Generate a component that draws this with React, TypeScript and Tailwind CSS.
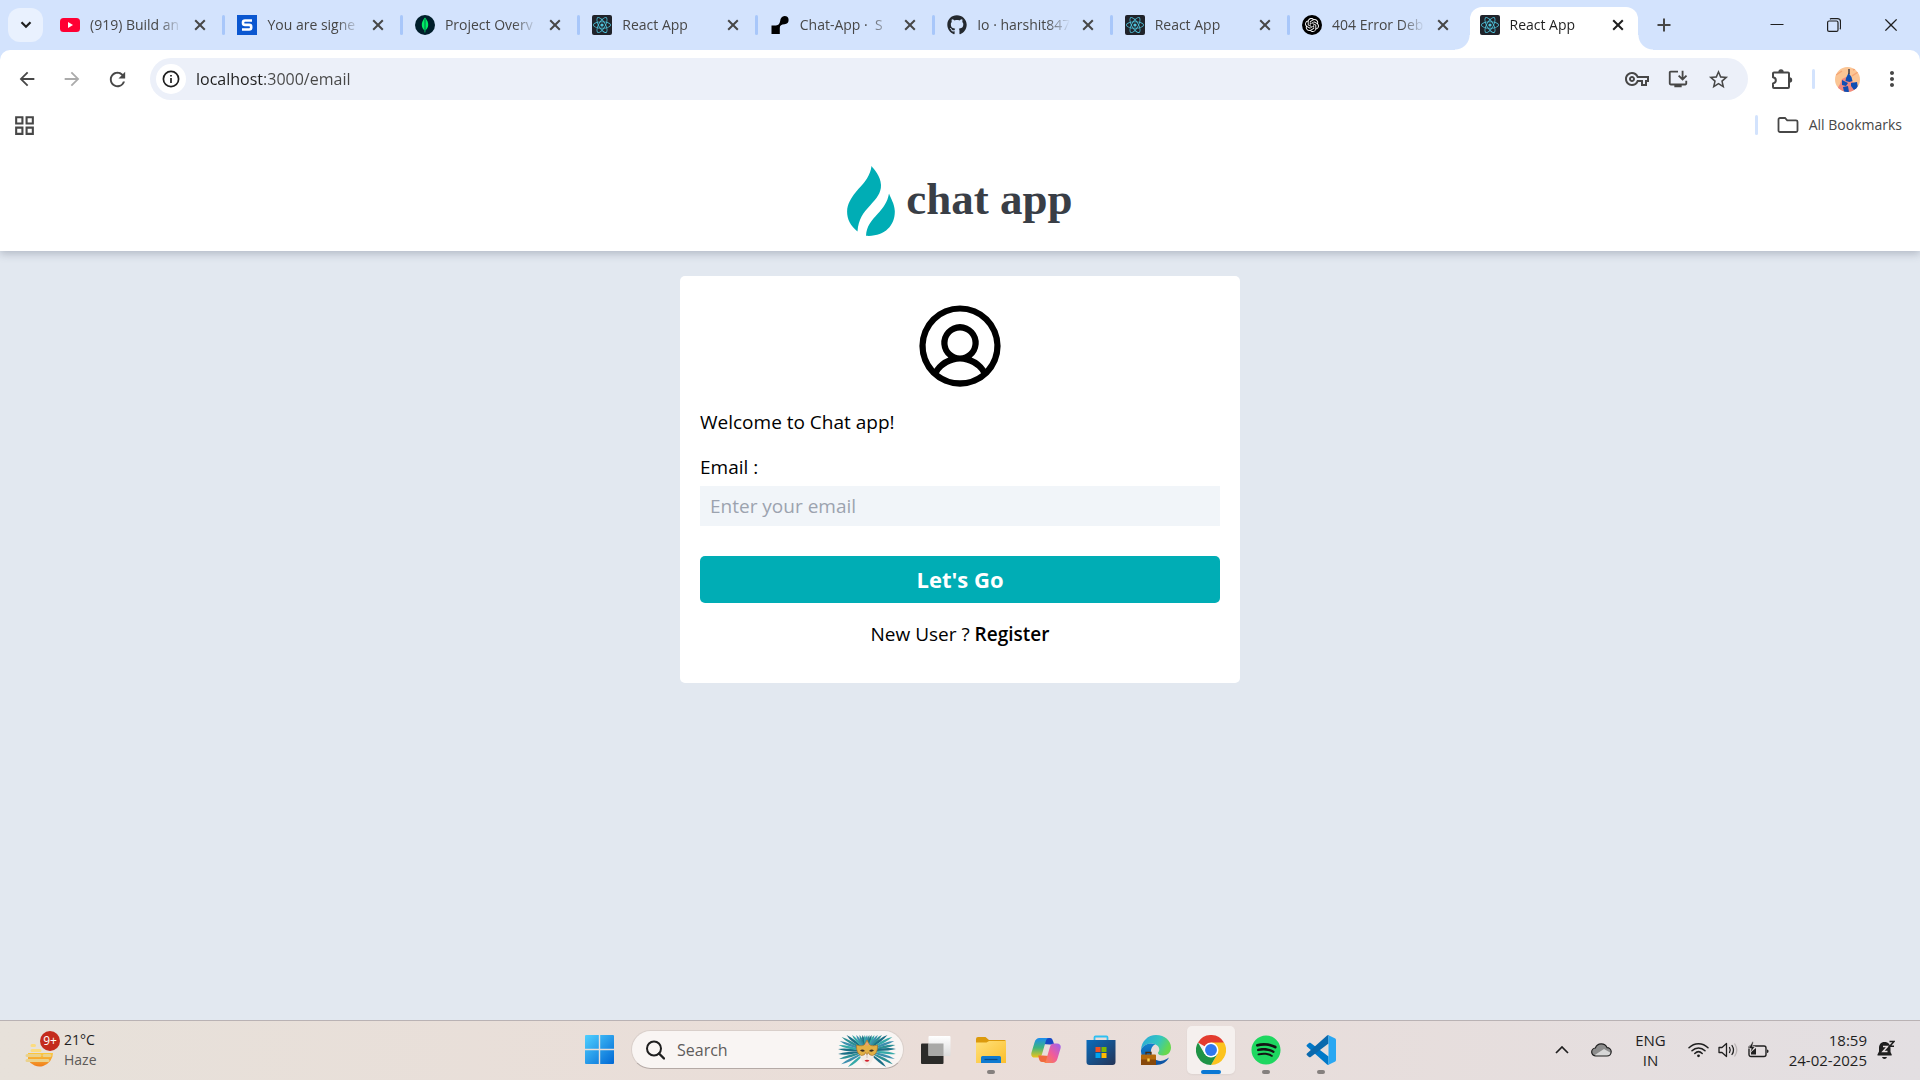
import type { ReactNode } from "react";
import { FaGithub, FaReact, FaSpotify } from "react-icons/fa";
import {
  MdArrowBack,
  MdArrowForward,
  MdMoreVert,
  MdOutlineGridView,
  MdOutlineInstallDesktop,
  MdOutlineVpnKey,
  MdRefresh,
  MdStarOutline,
} from "react-icons/md";
import { PiUserCircle } from "react-icons/pi";
import { SiOpenai } from "react-icons/si";
import { VscChromeClose } from "react-icons/vsc";

/* ---------- Favicons ---------- */

function YoutubeIcon() {
  return (
    <svg viewBox="0 0 20 20" className="size-5">
      <rect y="3" width="20" height="14" rx="3.5" fill="#ff0033" />
      <path d="M8 7l5 3-5 3z" fill="#fff" />
    </svg>
  );
}

function LetterSIcon() {
  return (
    <svg viewBox="0 0 20 20" className="size-5">
      <rect width="20" height="20" fill="#0b57d0" />
      <path
        d="M15 5.500H8a2 2 0 0 0-2 2v.4a2 2 0 0 0 2 2h4.200a2 2 0 0 1 2 2v.6a2 2 0 0 1-2 2H5"
        fill="none"
        stroke="#fff"
        strokeWidth="2.600"
      />
    </svg>
  );
}

function MongoIcon() {
  return (
    <svg viewBox="0 0 20 20" className="size-5">
      <circle cx="10" cy="10" r="10" fill="#001e2b" />
      <path d="M10 2.500c2.600 3 3.400 5.300 3.200 7.700-.2 2.500-1.500 4-2.800 5l-.2 2.300h-.5l-.2-2.300c-1.300-1-2.600-2.500-2.700-5C6.700 7.700 7.600 5.300 10 2.500z" fill="#00ed64" />
      <path d="M10 4v12" stroke="#00684a" strokeWidth="1" />
    </svg>
  );
}

function ReactIcon() {
  return (
    <span className="flex size-5 items-center justify-center rounded-xs bg-[#20232a]">
      <FaReact className="size-[18px] text-[#4fc4dc]" />
    </span>
  );
}

function RenderIcon() {
  return (
    <svg viewBox="0 0 20 20" className="size-5">
      <path d="M14.500 1a4 4 0 0 1 0 8.200c-3 .2-4.700 1-4.700 3.800v6H1.500v-8.500H6c2.500-.2 3.800-2 4.100-4.300C10.500 3.200 12 1 14.500 1z" fill="#000" />
    </svg>
  );
}

function OpenAiIcon() {
  return (
    <span className="flex size-5 items-center justify-center rounded-full bg-black">
      <SiOpenai className="size-[14px] text-white" />
    </span>
  );
}

/* ---------- Browser glyphs ---------- */

function CloseGlyph() {
  return (
    <svg viewBox="0 0 12 12" className="size-3" fill="none" stroke="currentColor" strokeWidth="2">
      <path d="M1.200 1.200l9.600 9.600M10.800 1.200l-9.600 9.600" />
    </svg>
  );
}

function InfoGlyph() {
  return (
    <svg viewBox="0 0 18 18" className="size-[18px]" fill="none" stroke="#1f1f1f" strokeWidth="1.700">
      <circle cx="9" cy="9" r="7.600" />
      <path d="M9 8v5M9 4.900v1.700" />
    </svg>
  );
}

function ExtensionGlyph() {
  return (
    <svg viewBox="0 0 22 22" className="size-[22px]" fill="none" stroke="#474747" strokeWidth="2">
      <path d="M3 4.500h14a1 1 0 0 1 1 1V19a1 1 0 0 1-1 1H3a1 1 0 0 1-1-1v-3.600c3.800-.6 3.800-5.600 0-6.200V5.500a1 1 0 0 1 1-1z" strokeLinejoin="round" />
      <path d="M7.300 4a2.700 2.700 0 0 1 5.400 0zM18.500 9.300a2.700 2.700 0 0 1 0 5.400z" fill="#474747" stroke="none" />
    </svg>
  );
}

function FolderGlyph() {
  return (
    <svg viewBox="0 0 22 18" className="h-[18px] w-[22px]" fill="none" stroke="#474747" strokeWidth="1.800">
      <path d="M1.500 3.500a1.500 1.500 0 0 1 1.500-1.500h5l2.200 2.300H19a1.500 1.500 0 0 1 1.500 1.500v8.700A1.500 1.500 0 0 1 19 16H3a1.500 1.500 0 0 1-1.500-1.500z" />
    </svg>
  );
}

function Avatar() {
  return (
    <svg viewBox="0 0 25 25" className="size-[25px]">
      <clipPath id="avatar-clip">
        <circle cx="12.500" cy="12.500" r="12.500" />
      </clipPath>
      <g clipPath="url(#avatar-clip)">
        <rect width="25" height="25" fill="#fbc594" />
        <path d="M1 8l6-4M17 9l6-4M18 3l4-2" stroke="#f5a574" strokeWidth="1.500" />
        <path d="M2 22l3-5 2-5 4-2 5 3 4 4 3 6-4 3H5z" fill="#f08a80" />
        <path d="M11 11l2.500-5 3 4 1 4-3 1-4-1zM7 13l6 3-2 3-4-1zM16 16l6-1 1 6-4 2-3-4zM8 20l5-1 1 6H9z" fill="#0f4fb4" />
        <path d="M14 2v5" stroke="#33323f" strokeWidth="1.400" />
      </g>
    </svg>
  );
}

/* ---------- Browser window ---------- */

type Tab = { title: string; icon: ReactNode; active?: boolean };

const tabs: Tab[] = [
  { title: "(919) Build an", icon: <YoutubeIcon /> },
  { title: "You are signe", icon: <LetterSIcon /> },
  { title: "Project Overv", icon: <MongoIcon /> },
  { title: "React App", icon: <ReactIcon /> },
  { title: "Chat-App \u00b7 \u00a0S", icon: <RenderIcon /> },
  { title: "Io · harshit847", icon: <FaGithub className="size-5 text-[#24292f]" /> },
  { title: "React App", icon: <ReactIcon /> },
  { title: "404 Error Deb", icon: <OpenAiIcon /> },
  { title: "React App", icon: <ReactIcon />, active: true },
];

function BrowserTab({ title, icon, active, separated }: Tab & { separated: boolean }) {
  return (
    <div className="flex h-full min-w-0 flex-1 items-end">
      <div
        className={
          active
            ? "relative flex h-[43px] min-w-0 flex-1 items-center rounded-t-xl bg-white pr-2.5 pb-[7px] pl-2.5 text-[#1f1f1f]"
            : "flex h-[43px] min-w-0 flex-1 items-center pr-[7px] pb-[7px] pl-2.5 text-[#474747]"
        }
      >
        {active && (
          <>
            <span className="absolute bottom-0 -left-[15px] size-[15px] bg-[radial-gradient(circle_at_0_0,transparent_14px,white_15px)]" />
            <span className="absolute -right-[15px] bottom-0 size-[15px] bg-[radial-gradient(circle_at_100%_0,transparent_14px,white_15px)]" />
          </>
        )}
        <span className="shrink-0">{icon}</span>
        <span className="ml-2.5 min-w-0 flex-1 overflow-hidden mask-r-from-75% mask-r-to-100% text-sm leading-5 whitespace-nowrap">
          {title}
        </span>
        <button type="button" aria-label={"Close " + title} className="ml-2 flex size-5 shrink-0 items-center justify-center">
          <CloseGlyph />
        </button>
      </div>
      {separated ? (
        <span className="mr-0.5 mb-[15px] ml-[5px] h-5 w-[3px] shrink-0 rounded-full bg-[#a8c7fa]" />
      ) : (
        <span className={active ? "w-[9px] shrink-0" : "w-2.5 shrink-0"} />
      )}
    </div>
  );
}

function TabStrip() {
  return (
    <div className="flex h-[50px] bg-[#d3e3fd]">
      <button type="button" aria-label="Search tabs" className="mt-2 mr-[7px] ml-2 flex h-[34px] w-[35px] shrink-0 items-center justify-center rounded-xl bg-[#e9f1fe]">
        <svg viewBox="0 0 12 8" className="h-2 w-3" fill="none" stroke="#1f1f1f" strokeWidth="2.200">
          <path d="M1.500 1.300L6 5.800l4.500-4.500" />
        </svg>
      </button>
      <div className="flex max-w-[1597px] min-w-0 flex-1">
        {tabs.map((tab, i) => (
          <BrowserTab key={i} {...tab} separated={!tab.active && !tabs[i + 1]?.active} />
        ))}
      </div>
      <button type="button" aria-label="New tab" className="flex w-[34px] shrink-0 items-center justify-center">
        <svg viewBox="0 0 14 14" className="size-3.5" stroke="#474747" strokeWidth="2">
          <path d="M7 .5v13M.5 7h13" />
        </svg>
      </button>
      <div className="ml-auto flex shrink-0 text-[#1f1f1f]">
        <button type="button" aria-label="Minimize" className="flex w-[57px] items-center justify-center">
          <svg viewBox="0 0 14 14" className="size-3.5" stroke="#1f1f1f">
            <path d="M.5 6.500h13" />
          </svg>
        </button>
        <button type="button" aria-label="Restore" className="flex w-[57px] items-center justify-center">
          <svg viewBox="0 0 14 14" className="size-3.5" fill="none" stroke="#1f1f1f" strokeWidth="1.200">
            <rect x=".6" y="3" width="10.400" height="10.400" rx="1.500" />
            <path d="M3 1.200A2 2 0 0 1 4 .7h6.500a3 3 0 0 1 3 3V10a2 2 0 0 1-.6 1.200" />
          </svg>
        </button>
        <button type="button" aria-label="Close window" className="flex w-[58px] items-center justify-center">
          <VscChromeClose className="size-[18px]" />
        </button>
      </div>
    </div>
  );
}

function Toolbar() {
  return (
    <div className="bg-[#d3e3fd]">
      <div className="flex h-14 items-center rounded-t-[10px] bg-white px-4 pt-0.5 text-[#474747]">
        <button type="button" aria-label="Back" className="mr-[23px]">
          <MdArrowBack className="size-[22px]" />
        </button>
        <button type="button" aria-label="Forward" className="mr-[23px] text-[#ababab]">
          <MdArrowForward className="size-[22px]" />
        </button>
        <button type="button" aria-label="Reload">
          <MdRefresh className="size-[23px]" />
        </button>
        <div className="ml-[21px] flex h-[42px] min-w-0 flex-1 items-center rounded-full bg-[#ecf0f9] pr-[18px] pl-1.5">
          <button type="button" aria-label="View site information" className="flex size-[30px] shrink-0 items-center justify-center rounded-full bg-white">
            <InfoGlyph />
          </button>
          <input
            aria-label="Address"
            defaultValue="localhost:3000/email"
            className="ml-2.5 min-w-0 flex-1 bg-[linear-gradient(90deg,#1f1f1f_68px,#474747_68px)] bg-clip-text text-base text-transparent outline-none"
          />
          <div className="flex items-center gap-[18px]">
            <button type="button" aria-label="Passwords">
              <MdOutlineVpnKey className="size-6" />
            </button>
            <button type="button" aria-label="Install app">
              <MdOutlineInstallDesktop className="size-[22px]" />
            </button>
            <button type="button" aria-label="Bookmark this page">
              <MdStarOutline className="size-[23px]" />
            </button>
          </div>
        </div>
        <button type="button" aria-label="Extensions" className="ml-[23px]">
          <ExtensionGlyph />
        </button>
        <span className="ml-[19px] h-5 w-[3px] rounded-full bg-[#d3e3fd]" />
        <button type="button" aria-label="Profile" className="ml-5">
          <Avatar />
        </button>
        <button type="button" aria-label="Menu" className="ml-5">
          <MdMoreVert className="size-6" />
        </button>
      </div>
    </div>
  );
}

function BookmarksBar() {
  return (
    <div className="relative z-10 flex h-10 items-center bg-white pr-[18px] pb-0.5 pl-3 text-[#474747]">
      <button type="button" aria-label="Tab groups">
        <MdOutlineGridView className="size-[25px]" />
      </button>
      <span className="ml-auto h-5 w-[3px] rounded-full bg-[#d3e3fd]" />
      <button type="button" className="ml-[19px] flex items-center gap-2.5 text-sm leading-5">
        <FolderGlyph />
        All Bookmarks
      </button>
    </div>
  );
}

/* ---------- Page ---------- */

function Logo() {
  return (
    <div className="flex items-center justify-center gap-[11px] pt-1">
      <svg viewBox="0 0 48 70" className="h-[70px] w-12" fill="#00adb5">
        <path d="M24.500 0C27 3.500 33.500 9.500 34 19c.2 8-4.500 13.500-10.500 20C16 47 11.500 53 10.500 65.500 3.500 60 0 53 .1 45.500.5 31 15 21 20 12.500c2.500-4.300 4-8 4.500-12.500z" />
        <path d="M42 27.500c1.500 4.500 5.500 10 5.800 17.500C48.200 59.500 37.500 71 19 69.800c.5-9.800 5.500-15.300 11.500-21.800 6-6.300 10-12 11.500-20.500z" />
      </svg>
      <span className="pb-1 font-['Liberation_Serif',serif] text-[45px] leading-[56px] font-bold text-[#393e46]">chat app</span>
    </div>
  );
}

function EmailCard() {
  return (
    <form className="mx-5 w-full max-w-[560px] rounded-[5px] bg-white p-5 text-[19px] leading-[30px] text-black">
      <PiUserCircle className="mx-auto size-[100px]" />
      <h3 className="mt-[11px]">Welcome to Chat app!</h3>
      <div className="mt-[15px] flex flex-col">
        <label htmlFor="email">Email :</label>
        <input
          id="email"
          type="email"
          placeholder="Enter your email"
          className="mt-1 h-10 bg-[#f1f5f9] px-2.5 outline-none placeholder:text-[#9ca3af]"
        />
      </div>
      <button type="button" className="mt-[30px] flex h-[47px] w-full items-center justify-center rounded-[5px] bg-[#00adb5] pb-0.5 text-[22px] font-bold text-white">
        Let's Go
      </button>
      <p className="mt-4 mb-[14px] text-center">
        New User ?{" "}
        <a href="#register" className="font-semibold">
          Register
        </a>
      </p>
    </form>
  );
}

/* ---------- Taskbar icons ---------- */

function WeatherIcon() {
  return (
    <svg viewBox="0 0 36 38" className="h-[38px] w-9">
      <defs>
        <linearGradient id="sun" x1="0" y1="0" x2="0" y2="1">
          <stop offset="0" stopColor="#fcc93c" />
          <stop offset="1" stopColor="#f07d1c" />
        </linearGradient>
      </defs>
      <path d="M3 25V22H28a13.500 13.500 0 0 1-25 7z" fill="url(#sun)" />
      <g strokeLinecap="round" strokeWidth="3" fill="none">
        <path d="M7 14.500h2.500M7 19.500h8" stroke="#fbdc80" />
        <path d="M2 24.500h13M19 24.500h6M2 29.500h21" stroke="#ead28c" />
      </g>
      <circle cx="25" cy="10" r="10" fill="#c42b1c" />
      <text x="25" y="14" textAnchor="middle" fontSize="12" fill="#fff">
        9+
      </text>
    </svg>
  );
}

function StartIcon() {
  return (
    <svg viewBox="0 0 29 29" className="size-[29px]">
      <defs>
        <linearGradient id="start" x1="0" y1="0" x2="1" y2="1">
          <stop offset="0" stopColor="#4fd0ff" />
          <stop offset="1" stopColor="#0067d4" />
        </linearGradient>
      </defs>
      <path fill="url(#start)" d="M1 0h12.800v13.800H0V1a1 1 0 0 1 1-1zM15.200 0H28a1 1 0 0 1 1 1v12.800H15.200zM0 15.200h13.800V29H1a1 1 0 0 1-1-1zM15.200 15.200H29V28a1 1 0 0 1-1 1H15.200z" />
    </svg>
  );
}

const feathers = [
  -176, -168, -160, -151, -142, -133, -124, -115, -106, -98, -90, -82, -74, -65, -56, -47, -38, -29, -20, -12, -4, 6, 16, 27, 40, 140, 153, 164,
  174,
];
const featherColors = ["#1b6f86", "#35a9a8", "#3c8fae", "#2c8f95"];

function featherLength(angle: number) {
  const rad = (angle * Math.PI) / 180;
  return Math.min(29, 16 / Math.max(0.01, Math.abs(Math.sin(rad))));
}

function MaskIcon() {
  return (
    <svg viewBox="-30 -18 60 34" className="h-[34px] w-[60px] shrink-0">
      {feathers.map((angle, i) => {
        const len = featherLength(angle);
        return (
          <path
            key={angle}
            transform={"rotate(" + angle + ")"}
            d={"M3 0Q" + len * 0.7 + " -3.2 " + len + " 0Q" + len * 0.7 + " 2 3 0z"}
            fill={featherColors[i % 4]}
          />
        );
      })}
      <path d="M-7-2H7q1 7-2.500 13L0 15.500-4.500 11Q-8 5-7-2z" fill="#f3ebe5" />
      <path
        d="M-10.500-6Q-4-4-2-7L0-11 2-7Q4-4 10.500-6 11 3 5.500 4.500 2 4.500 1.300 1.500L0 4-1.300 1.500Q-2 4.500-5.500 4.500-11 3-10.500-6z"
        fill="#e2b045"
        stroke="#a8742a"
        strokeWidth=".7"
      />
      <path d="M-7-.5Q-4.500-2.500-2 0-5 1.500-7-.5zM7-.5Q4.500-2.500 2 0 5 1.500 7-.5z" fill="#3c2c20" />
      <path d="M0 3v4" stroke="#cfc1b8" />
      <path d="M-2.500 9.500Q0 8 2.500 9.500 0 12-2.500 9.500z" fill="#d3202c" />
      <circle cx="0" cy="-7" r="1.600" fill="#e3a07c" />
    </svg>
  );
}

function TaskViewIcon() {
  return (
    <svg viewBox="0 0 30 30" className="size-[30px]">
      <defs>
        <linearGradient id="tv" x1="0" y1="0" x2="0" y2="1">
          <stop offset="0" stopColor="#fff" />
          <stop offset="1" stopColor="#dcdcdc" />
        </linearGradient>
      </defs>
      <rect y="8.500" width="22.500" height="20.500" rx="1" fill="#2b2b29" />
      <rect x="7.500" y="1" width="22" height="20" rx="1" fill="url(#tv)" />
      <path d="M7.500 8.500h15V21h-15z" fill="#a9a9a7" />
    </svg>
  );
}

function ExplorerIcon() {
  return (
    <svg viewBox="0 0 30 30" className="size-[30px]">
      <defs>
        <linearGradient id="fold" x1="0" y1="0" x2="1" y2="1">
          <stop offset="0" stopColor="#ffe07a" />
          <stop offset="1" stopColor="#fbbf2d" />
        </linearGradient>
      </defs>
      <path d="M0 4a2 2 0 0 1 2-2h7.500L13 5h15.500A1.500 1.500 0 0 1 30 6.500V12H0z" fill="#dc9a0c" />
      <path d="M0 7.500h10.500L13 6h17v22H0z" fill="url(#fold)" />
      <path d="M5 28v-5.500A1.500 1.500 0 0 1 6.500 21h17a1.500 1.500 0 0 1 1.500 1.500V28z" fill="#0f7ad0" />
      <path d="M8.500 24.500h13" stroke="#0a4c87" strokeWidth="1.200" />
    </svg>
  );
}

function CopilotIcon() {
  return (
    <svg viewBox="0 0 30 28" className="h-7 w-[30px]">
      <defs>
        <linearGradient id="cpa" x1="0" y1="0" x2="0" y2="1">
          <stop offset="0" stopColor="#1b8df0" />
          <stop offset=".5" stopColor="#3fb57c" />
          <stop offset="1" stopColor="#f0c419" />
        </linearGradient>
        <linearGradient id="cpb" x1="1" y1="0" x2="0" y2="1">
          <stop offset="0" stopColor="#9a62f2" />
          <stop offset=".5" stopColor="#f05c9b" />
          <stop offset="1" stopColor="#fb8a3c" />
        </linearGradient>
      </defs>
      <path d="M14 2h5c2 0 2.500 1.500 3 3l1.200 3.500h-4.500L12 8z" fill="#1648c4" />
      <path d="M8.500 2H18c-2 0-2.700 1.500-3.300 3.500l-3.500 12C10.500 20 9.500 21.500 7 21.500H4c-3 0-4.300-2-3.500-5l3-10C4.300 3.600 6 2 8.500 2z" fill="url(#cpa)" />
      <path d="M16 26h-5c-2 0-2.500-1.500-3-3l-.8-3.500h4.500l6.300.5z" fill="#f06a3c" />
      <path d="M21.500 27H12c2 0 2.700-1.500 3.300-3.500l3.500-12c.7-2.500 1.700-4 4.200-4h3c3 0 4.300 2 3.500 5l-3 10c-.8 2.900-2.500 4.500-5 4.500z" fill="url(#cpb)" />
    </svg>
  );
}

function StoreIcon() {
  return (
    <svg viewBox="0 0 30 30" className="size-[30px]">
      <defs>
        <linearGradient id="store" x1="0" y1="0" x2="1" y2="1">
          <stop offset="0" stopColor="#0a6cbc" />
          <stop offset="1" stopColor="#243457" />
        </linearGradient>
      </defs>
      <path d="M8.500 6V2.500a1 1 0 0 1 1-1h11a1 1 0 0 1 1 1V6" fill="none" stroke="#2fc0f2" strokeWidth="1.800" />
      <path d="M.5 5h29v22a3 3 0 0 1-3 3h-23a3 3 0 0 1-3-3z" fill="url(#store)" />
      <path d="M9.500 12h5v5h-5z" fill="#f25022" />
      <path d="M15.500 12h5v5h-5z" fill="#7fba00" />
      <path d="M9.500 18h5v5h-5z" fill="#00a4ef" />
      <path d="M15.500 18h5v5h-5z" fill="#ffb900" />
    </svg>
  );
}

function EdgeIcon() {
  return (
    <svg viewBox="0 0 30 30" className="size-[30px]">
      <defs>
        <linearGradient id="ega" x1="0" y1="0" x2="1" y2=".4">
          <stop offset="0" stopColor="#2aa5dc" />
          <stop offset=".6" stopColor="#33c6c0" />
          <stop offset="1" stopColor="#66d84f" />
        </linearGradient>
        <linearGradient id="egb" x1="0" y1="0" x2="0" y2="1">
          <stop offset="0" stopColor="#1280cd" />
          <stop offset="1" stopColor="#0d4f9e" />
        </linearGradient>
      </defs>
      <path d="M0 15C.5 6 7 0 15 0c9 0 15 6 15 12.500 0 5-3.500 8-8 8-3.500 0-5-1.200-5-2.500 0-1 1.300-1.500 1.300-3.500C18.300 11 14.500 8.500 10 8.500 5 8.500 1.500 11.500 0 15z" fill="url(#ega)" />
      <path d="M0 15c1.500-3.500 5-6.500 10-6.500 1.500 0 3 .3 4.300.8C11 11 9.500 14 10 18c.6 6 7 9 12 7.500 3-.8 4.500-2 6-3C26 27 21 30 15 30 6 30-.4 23 0 15z" fill="url(#egb)" />
      <path d="M0 20.500a1 1 0 0 1 1-1h13a1 1 0 0 1 1 1V30H0z" fill="#b5690b" />
      <path d="M0 24.500h15V30H0z" fill="#87480a" />
      <path d="M5 19.500v-2h5v2" fill="none" stroke="#4b2a0a" strokeWidth="1.300" />
      <path d="M6.300 23.500h2.400v3H6.300z" fill="#ffd34a" />
    </svg>
  );
}

function ChromeIcon() {
  return (
    <svg viewBox="0 0 48 48" className="size-[30px]">
      <path d="M24 24L3.200 12A24 24 0 0 1 44.800 12z" fill="#e33b2e" />
      <path d="M44.800 12A24 24 0 0 1 24 48l10.400-18L24 12z" fill="#fcc31e" />
      <path d="M24 48A24 24 0 0 1 3.200 12l10.400 18L34.400 30z" fill="#1f9346" />
      <circle cx="24" cy="24" r="12" fill="#fff" />
      <circle cx="24" cy="24" r="9.500" fill="#2f78ee" />
    </svg>
  );
}

function SpotifyIcon() {
  return (
    <svg viewBox="0 0 30 30" className="size-[30px]">
      <circle cx="15" cy="15" r="13" fill="#141414" />
      <FaSpotify size={30} color="#1ed760" />
    </svg>
  );
}

function VsCodeIcon() {
  return (
    <svg viewBox="0 0 30 30" className="size-[30px]">
      <path d="M1 9.800l2-1.800c.5-.4 1.200-.4 1.700 0L22.500 21.500V30c-.7 0-1.200-.2-1.700-.7L.9 11.500c-.5-.5-.5-1.200.1-1.700z" fill="#0078c8" />
      <path d="M1 20.200L3 22c.5.400 1.200.4 1.700 0L22.500 8.500V0c-.7 0-1.200.2-1.700.7L.9 18.500c-.5.5-.5 1.200.1 1.700z" fill="#0a69ad" />
      <path d="M22.500.2l6.300 3c.7.3 1.200 1 1.200 1.800v20c0 .8-.5 1.500-1.200 1.800l-6.300 3c-.7.3-1.500.1-2-.4.700.6 2 .2 2-.9V1.500c0-1.100-1.300-1.500-2-.9.5-.5 1.300-.7 2-.4z" fill="#29a7f2" />
    </svg>
  );
}

function CloudIcon() {
  return (
    <svg viewBox="0 0 21 15" className="h-[15px] w-[21px]">
      <path d="M5 14a4 4 0 0 1-.600-8A6.300 6.300 0 0 1 16 5.600 4.200 4.200 0 0 1 16 14z" fill="#8d8d8d" />
      <path d="M3 13.500L13 7l7 4c-.5 2-2 3-4 3H5z" fill="#d7d7d7" />
      <path d="M5 14a4 4 0 0 1-.600-8A6.300 6.300 0 0 1 16 5.600 4.200 4.200 0 0 1 16 14z" fill="none" stroke="#1f1f1f" strokeWidth="1.200" />
    </svg>
  );
}

function WifiIcon() {
  return (
    <svg viewBox="0 0 21 16" className="h-4 w-[21px]" fill="none" stroke="#1f1f1f" strokeWidth="1.500" strokeLinecap="round">
      <path d="M1 5.800c5.300-5.400 13.700-5.400 19 0M4 8.800c3.700-3.800 9.300-3.800 13 0M6.800 11.500c2.200-2.200 5.200-2.200 7.400 0" />
      <circle cx="10.500" cy="13.800" r="1.400" fill="#1f1f1f" stroke="none" />
    </svg>
  );
}

function SpeakerIcon() {
  return (
    <svg viewBox="0 0 21 16" className="h-4 w-[21px]" fill="none" stroke="#1f1f1f" strokeWidth="1.300" strokeLinecap="round" strokeLinejoin="round">
      <path d="M1 5.500h3L8.500 1.500v13L4 10.500H1z" />
      <path d="M11.500 5.500q1.500 2.500 0 5M14 3.500q3 4.500 0 9" />
      <path d="M16.800 2q4 6 0 12" stroke="#b9b3b3" />
    </svg>
  );
}

function BatteryIcon() {
  return (
    <svg viewBox="0 0 21 16" className="h-4 w-[21px] overflow-visible">
      <rect x="1" y="4" width="17" height="10.500" rx="2" fill="none" stroke="#1f1f1f" strokeWidth="1.400" />
      <path d="M19 7.500c2 0 2 3.500 0 3.500z" fill="#1f1f1f" />
      <path d="M3 12.500V10l5-4v6.500z" fill="#1f1f1f" />
      <path d="M4.500-.5L.5 6.500h2.700l-.9 4.500 4.700-6.500H4.400l1-4.500z" fill="#1f1f1f" stroke="#e6dfe0" strokeWidth=".6" />
    </svg>
  );
}

function BellIcon() {
  return (
    <svg viewBox="0 0 18 20" className="h-5 w-[18px]">
      <path d="M7.500 2C3.700 2 2 4.700 2 8v3.500L.5 14.500c-.2.500 0 1 .600 1h13c.6 0 .8-.5.600-1L13.500 12V8c0-3.300-2.200-6-6-6zM5 17h5c-.4 1.300-1.300 2-2.500 2S5.400 18.300 5 17z" fill="#1f1f1f" />
      <path d="M6 6.500h4.500l-4.500 5h4.500" fill="none" stroke="#e6dfe0" strokeWidth="1.500" />
      <path d="M12.500 1.500H17l-4.200 4.800H17" fill="none" stroke="#1f1f1f" strokeWidth="1.600" />
    </svg>
  );
}

/* ---------- Taskbar ---------- */

type TaskbarApp = { name: string; icon: ReactNode; state?: "running" | "focused" };

const apps: TaskbarApp[] = [
  { name: "Task View", icon: <TaskViewIcon /> },
  { name: "File Explorer", icon: <ExplorerIcon />, state: "running" },
  { name: "Copilot", icon: <CopilotIcon /> },
  { name: "Microsoft Store", icon: <StoreIcon /> },
  { name: "Microsoft Edge", icon: <EdgeIcon /> },
  { name: "Google Chrome", icon: <ChromeIcon />, state: "focused" },
  { name: "Spotify", icon: <SpotifyIcon />, state: "running" },
  { name: "Visual Studio Code", icon: <VsCodeIcon />, state: "running" },
];

function Taskbar() {
  return (
    <footer className="flex h-[60px] shrink-0 items-center border-t border-[#b9b2b4] bg-linear-to-r from-[#e7e1da] via-[#eaddd8] to-[#e3dfe2] px-[25px] pb-0.5 text-[#1f1f1f]">
      <div className="flex flex-1 items-center">
        <button type="button" className="flex items-center gap-[3px] text-left text-sm leading-5">
          <WeatherIcon />
          <span className="flex flex-col">
            <span>21°C</span>
            <span className="text-[#5d5a58]">Haze</span>
          </span>
        </button>
      </div>

      <div className="flex items-center">
        <button type="button" aria-label="Start" className="flex size-12 items-center justify-center">
          <StartIcon />
        </button>
        <div className="mx-2 flex h-[39px] w-[273px] items-center rounded-full border border-[#d9cfca] border-b-[#b5aaa6] bg-[#f9f5f3] pr-1.5 pl-[13px]">
          <svg viewBox="0 0 20 20" className="size-5 shrink-0" fill="none" stroke="#1f1f1f" strokeWidth="2">
            <circle cx="9" cy="8.500" r="7" />
            <path d="M14 13.500l5 5" strokeWidth="2.400" strokeLinecap="round" />
          </svg>
          <input aria-label="Search" placeholder="Search" className="ml-3 min-w-0 flex-1 text-base outline-none placeholder:text-[#5f5c5b]" />
          <MaskIcon />
        </div>
        <div className="flex gap-[7px]">
          {apps.map((app) => (
            <button
              key={app.name}
              type="button"
              aria-label={app.name}
              className={
                app.state === "focused"
                  ? "relative flex size-12 items-center justify-center rounded-[5px] bg-[#f5f0ee] shadow-xs"
                  : "relative flex size-12 items-center justify-center"
              }
            >
              {app.icon}
              {app.state === "running" && <span className="absolute bottom-0 h-1 w-2 rounded-full bg-[#85807e]" />}
              {app.state === "focused" && <span className="absolute bottom-0 h-1 w-5 rounded-full bg-[#0a78d4]" />}
            </button>
          ))}
        </div>
      </div>

      <div className="flex flex-1 items-center justify-end text-[15px] leading-5">
        <button type="button" aria-label="Show hidden icons" className="mr-[22px]">
          <svg viewBox="0 0 14 8" className="h-2 w-3.5" fill="none" stroke="#1f1f1f" strokeWidth="1.700">
            <path d="M1 7l6-6 6 6" />
          </svg>
        </button>
        <button type="button" aria-label="OneDrive" className="mr-[23px]">
          <CloudIcon />
        </button>
        <button type="button" className="mr-[22px] flex flex-col items-center">
          <span>ENG</span>
          <span>IN</span>
        </button>
        <button type="button" aria-label="Network, volume and battery" className="mr-5 flex items-center gap-[9px]">
          <WifiIcon />
          <SpeakerIcon />
          <BatteryIcon />
        </button>
        <button type="button" className="mr-2.5 flex flex-col items-end">
          <span>18:59</span>
          <span>24-02-2025</span>
        </button>
        <button type="button" aria-label="Notifications">
          <BellIcon />
        </button>
      </div>
    </footer>
  );
}

export default function App() {
  return (
    <div className="flex min-h-screen flex-col bg-[#e2e8f0] font-['Open_Sans','Noto_Sans',sans-serif]">
      <TabStrip />
      <Toolbar />
      <BookmarksBar />
      <header className="flex h-[105px] items-center justify-center bg-white shadow-[0_3px_8px_rgba(60,70,90,0.28)]">
        <Logo />
      </header>
      <main className="flex flex-1 items-start justify-center pt-[25px]">
        <EmailCard />
      </main>
      <Taskbar />
    </div>
  );
}
